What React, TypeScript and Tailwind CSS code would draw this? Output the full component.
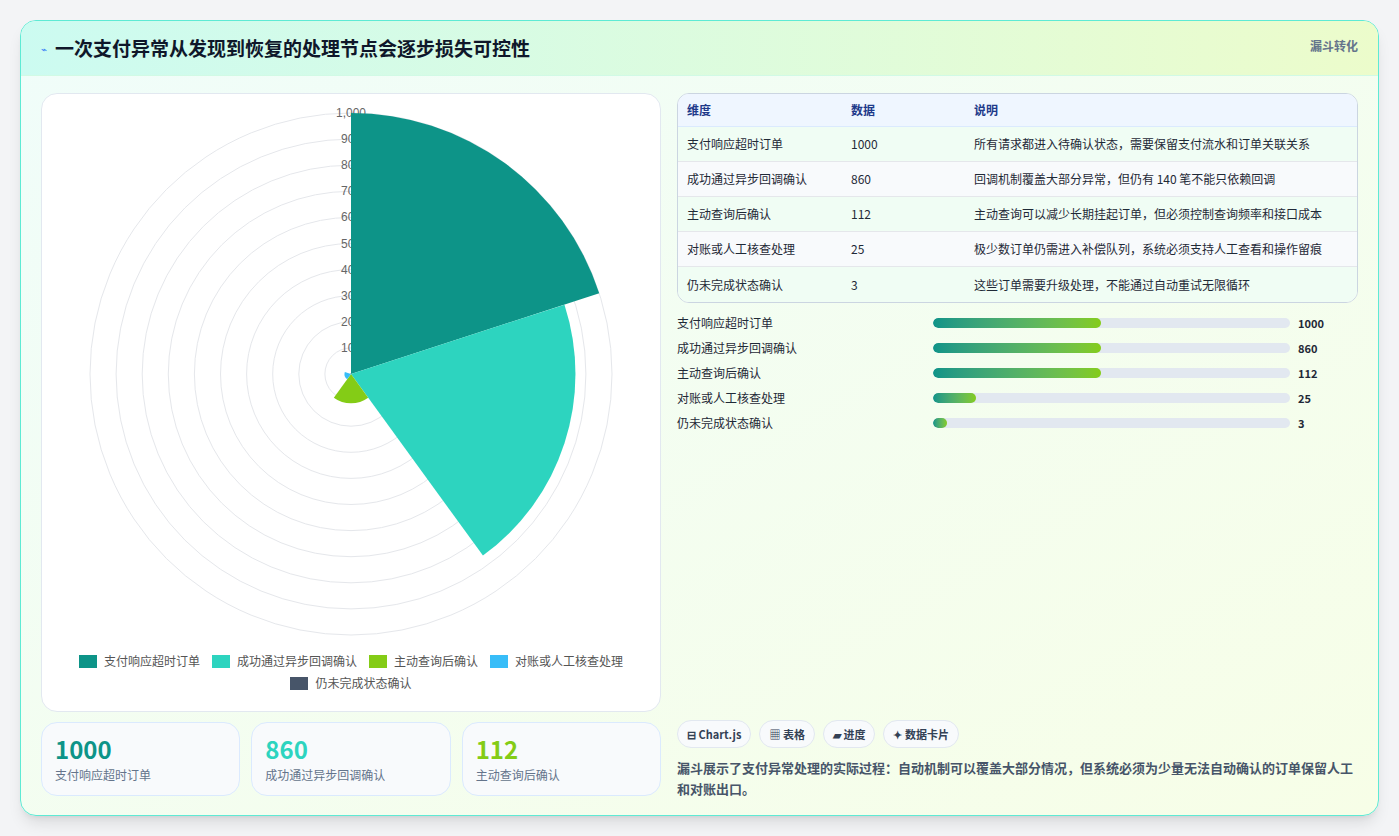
import React from "react";

const F = { fontFamily: '"Noto Sans CJK SC", "Noto Sans", sans-serif' };
const rows = [
  ["支付响应超时订单", "1000", "所有请求都进入待确认状态，需要保留支付流水和订单关联关系", "#0d9488"],
  ["成功通过异步回调确认", "860", "回调机制覆盖大部分异常，但仍有 140 笔不能只依赖回调", "#2dd4bf"],
  ["主动查询后确认", "112", "主动查询可以减少长期挂起订单，但必须控制查询频率和接口成本", "#84cc16"],
  ["对账或人工核查处理", "25", "极少数订单仍需进入补偿队列，系统必须支持人工查看和操作留痕", "#38bdf8"],
  ["仍未完成状态确认", "3", "这些订单需要升级处理，不能通过自动重试无限循环", "#475569"],
];
const barW = [47, 47, 47, 12, 4];

function Chart() {
  const cx = 309, cy = 280, R = 261;
  const wedge = (v: number, a0: number, a1: number) => {
    const r = (v / 1000) * R;
    const p = (a: number) => [cx + r * Math.cos((a * Math.PI) / 180), cy + r * Math.sin((a * Math.PI) / 180)];
    const [x0, y0] = p(a0), [x1, y1] = p(a1);
    return `M${cx},${cy} L${x0},${y0} A${r},${r} 0 0 1 ${x1},${y1} Z`;
  };
  return (
    <svg width="618" height="560" className="block">
      {Array.from({ length: 10 }).map((_, i) => (
        <circle key={i} cx={cx} cy={cy} r={(R * (i + 1)) / 10} fill="none" stroke="#e5e7eb" strokeWidth="1" />
      ))}
      {Array.from({ length: 10 }).map((_, i) => {
        const v = (i + 1) * 100;
        return (
          <text key={i} x={cx} y={cy - (R * (i + 1)) / 10 + 4} textAnchor="middle" fontSize="12" fill="#666" style={{ fontFamily: '"Liberation Sans", sans-serif' }}>
            {v === 1000 ? "1,000" : v}
          </text>
        );
      })}
      {rows.map((r, i) => (
        <path key={i} d={wedge(Number(r[1]), -90 + i * 72, -18 + i * 72)} fill={r[3]} />
      ))}
    </svg>
  );
}

export default function App() {
  return (
    <div className="w-[1399px] h-[836px] bg-[#f3f4f6] p-5" style={F}>
      <div className="h-[796px] rounded-2xl border border-[#5eead4] overflow-hidden flex flex-col bg-gradient-to-br from-[#f0fdfa] to-[#f7fee7] shadow-lg">
        <div className="h-[55px] shrink-0 flex items-center justify-between px-5 bg-gradient-to-r from-[#ccfbf1] to-[#ecfccb] border-b border-[#d1fae5]">
          <div className="flex items-center gap-2">
            <span className="text-[#3b82f6] text-[10px]">⌁</span>
            <span className="text-[19px] font-bold text-[#0f172a]">一次支付异常从发现到恢复的处理节点会逐步损失可控性</span>
          </div>
          <span className="text-[12px] font-semibold text-[#64748b] self-start mt-[16px]">漏斗转化</span>
        </div>
        <div className="flex-1 flex gap-4 px-5 pt-[17px] pb-4">
          <div className="w-[620px] flex flex-col gap-[10px]">
            <div className="h-[619px] bg-white rounded-2xl border border-[#e2e8f0] flex flex-col items-center pt-0">
              <Chart />
              <div className="flex flex-wrap justify-center gap-x-3 gap-y-1 w-[560px] text-[12px] text-[#555] mt-[-2px]">
                {rows.map((r) => (
                  <div key={r[0]} className="flex items-center gap-[7px]">
                    <span className="w-[18px] h-[13px]" style={{ background: r[3] }} />
                    {r[0]}
                  </div>
                ))}
              </div>
            </div>
            <div className="grid grid-cols-3 gap-[11px]">
              {rows.slice(0, 3).map((r) => (
                <div key={r[0]} className="h-[74px] rounded-2xl border border-[#dbeafe] bg-[#f8fafc] px-[13px] pt-[12px]">
                  <div className="text-[24px] font-bold leading-[28px]" style={{ color: r[3] }}>{r[1]}</div>
                  <div className="text-[12px] text-[#64748b] mt-[3px]">{r[0]}</div>
                </div>
              ))}
            </div>
          </div>
          <div className="flex-1 flex flex-col">
            <div className="rounded-xl border border-[#cbd5e1] overflow-hidden bg-white">
              <div className="h-[33px] flex items-center bg-[#eff6ff] border-b border-[#dbeafe] text-[12px] font-semibold text-[#1e3a8a] px-[9px]">
                <span className="w-[164px]">维度</span><span className="w-[123px]">数据</span><span>说明</span>
              </div>
              {rows.map((r, i) => (
                <div key={r[0]} className={`h-[35px] flex items-center text-[12px] text-[#1f2937] px-[9px] ${i < 4 ? "border-b border-[#e5e7eb]" : ""} ${i % 2 ? "bg-[#f8fafc]" : "bg-[#f0fdf4]"}`}>
                  <span className="w-[164px]">{r[0]}</span><span className="w-[123px]">{r[1]}</span><span>{r[2]}</span>
                </div>
              ))}
            </div>
            <div className="flex flex-col gap-[11px] mt-[13px]">
              {rows.map((r, i) => (
                <div key={r[0]} className="flex items-center h-[14px] text-[12px] text-[#1f2937]">
                  <span className="w-[256px]">{r[0]}</span>
                  <div className="w-[357px] h-[10px] rounded-full bg-[#e2e8f0] overflow-hidden">
                    <div className="h-full rounded-full bg-gradient-to-r from-[#0d9488] to-[#84cc16]" style={{ width: `${barW[i]}%` }} />
                  </div>
                  <span className="ml-2 font-bold text-[11px]">{r[1]}</span>
                </div>
              ))}
            </div>
            <div className="flex-1" />
            <div className="flex gap-2 text-[11px] font-semibold text-[#334155]">
              {["⊟ Chart.js", "▦ 表格", "▰ 进度", "✦ 数据卡片"].map((c) => (
                <span key={c} className="h-[28px] px-[9px] flex items-center rounded-full border border-[#e2e8f0] bg-[#f8fafc]">{c}</span>
              ))}
            </div>
            <p className="mt-[9px] text-[13px] leading-[21px] font-semibold text-[#475569]">
              漏斗展示了支付异常处理的实际过程：自动机制可以覆盖大部分情况，但系统必须为少量无法自动确认的订单保留人工和对账出口。
            </p>
          </div>
        </div>
      </div>
    </div>
  );
}
